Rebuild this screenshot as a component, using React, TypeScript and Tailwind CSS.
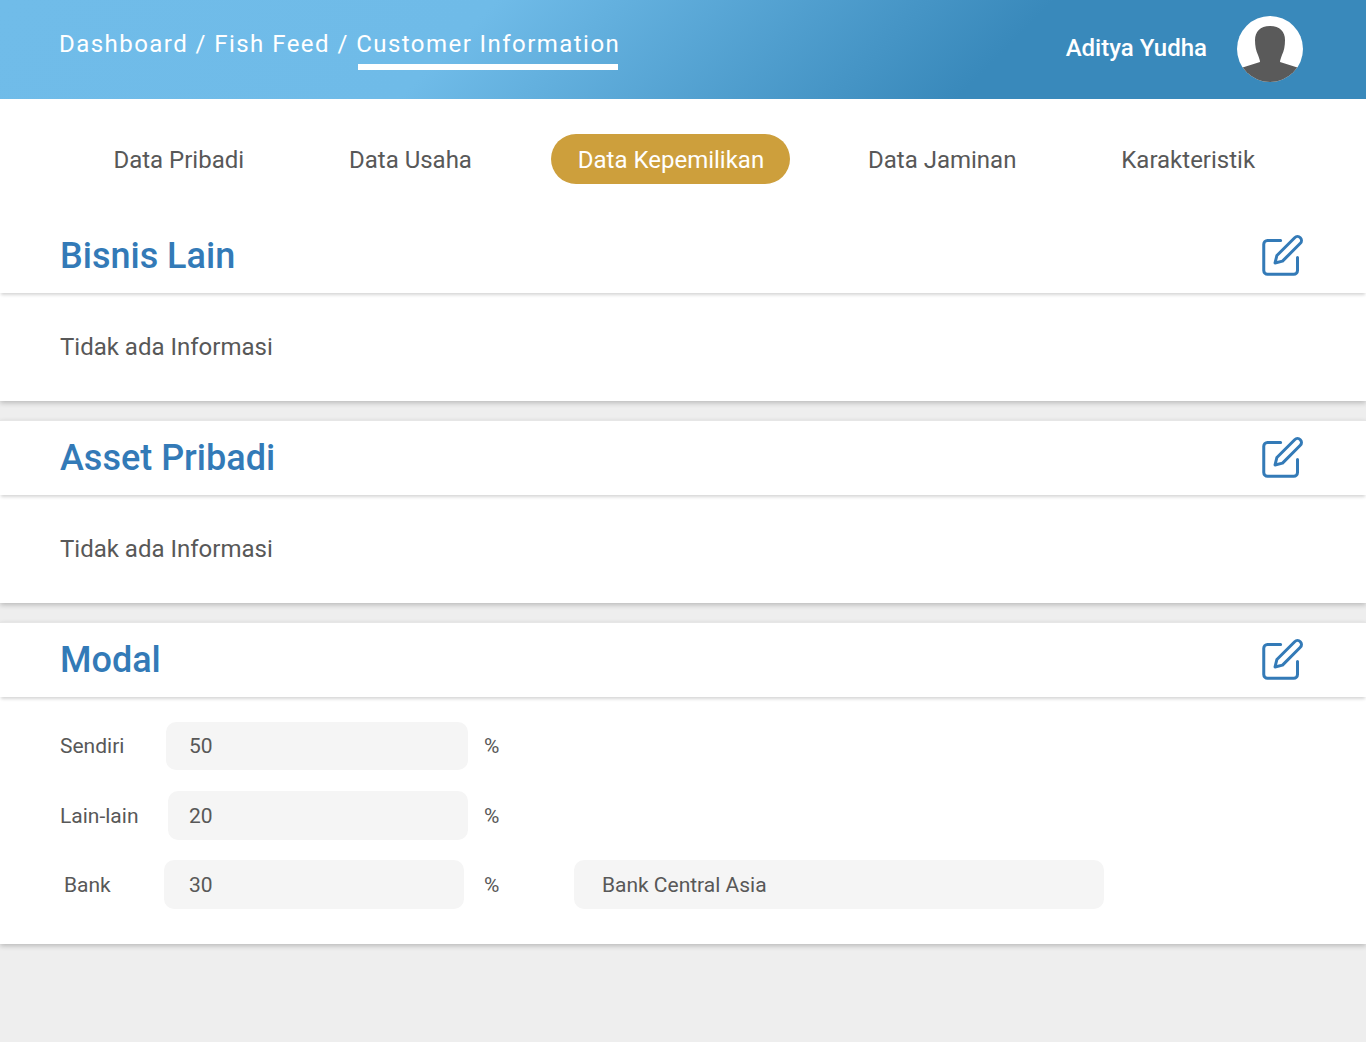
function EditIcon() {
  return (
    <svg viewBox="0 0 24 24" fill="none" stroke="#337ab7" strokeWidth={1.6} strokeLinecap="round" strokeLinejoin="round" className="mb-[2px] h-[45px] w-[45px]">
      <path d="M11 4H4a2 2 0 0 0-2 2v14a2 2 0 0 0 2 2h14a2 2 0 0 0 2-2v-7" />
      <path d="M18.5 2.5a2.121 2.121 0 0 1 3 3L12 15l-4 1 1-4 9.5-9.5z" />
    </svg>
  );
}

function Section({ title, children }: { title: string; children: React.ReactNode }) {
  return (
    <section className="bg-white shadow-[0_2px_5px_rgba(0,0,0,0.22)] border-t border-[#e6e6e6] first:border-t-0">
      <div className="relative flex h-[74px] items-center justify-between pl-[60px] pr-[61px] shadow-[0_3px_3px_-1px_rgba(0,0,0,0.16)]">
        <h2 className="text-[36px] font-medium leading-none text-[#337ab7]">{title}</h2>
        <EditIcon />
      </div>
      {children}
    </section>
  );
}

function Empty() {
  return <div className="flex h-[108px] items-center pl-[60px] text-[24px] text-[#585858]">Tidak ada Informasi</div>;
}

function Field({ className, children }: { className: string; children: React.ReactNode }) {
  return <div className={`flex items-center rounded-[10px] bg-[#f5f5f5] pt-[2px] text-[21px] text-[#585858] ${className}`}>{children}</div>;
}

export default function App() {
  return (
    <div className="min-h-[1042px] bg-[#eeeeee] font-['Roboto',sans-serif]">
      <header className="flex h-[99px] items-start justify-between bg-[linear-gradient(135deg,#70bce9_0%,#6fbbe8_34%,#3989bb_72%,#3989bb_100%)] pl-[59px] pr-[63px] text-white">
        <div className="mt-[29px] flex text-[24px] leading-[30px] tracking-[1.45px]">
          <span className="whitespace-pre">Dashboard / Fish Feed / </span>
          <span className="relative">
            Customer Information
            <span className="absolute left-[2px] top-[35px] h-[6px] w-[260px] bg-white" />
          </span>
        </div>
        <div className="mt-[16px] flex items-center gap-[30px]">
          <span className="-translate-y-[1px] text-[24px] font-medium">Aditya Yudha</span>
          <svg viewBox="0 0 66 66" className="h-[66px] w-[66px]">
            <defs>
              <clipPath id="c">
                <circle cx="33" cy="33" r="33" />
              </clipPath>
            </defs>
            <circle cx="33" cy="33" r="33" fill="#fff" />
            <g clipPath="url(#c)" fill="#5a5a5a">
              <path d="M33 10c-10 0-15 6-15 14 0 6 1 11 3 15 1 3 2 5 2 7l-19 6v20h58V52l-19-6c0-2 1-4 2-7 2-4 3-9 3-15 0-8-5-14-15-14z" />
            </g>
          </svg>
        </div>
      </header>

      <nav className="relative z-10 flex h-[120px] items-start justify-around bg-white pl-[62px] pr-[58.5px] pt-[35px] text-[24px] leading-[48px] text-[#585858]">
        <span className="-ml-[1px] px-[27px] pt-[2px]">Data Pribadi</span>
        <span className="px-[27px] pt-[2px]">Data Usaha</span>
        <span className="ml-[1px] rounded-full bg-[#cd9f3c] pl-[27px] pr-[26px] pt-[2px] text-white">Data Kepemilikan</span>
        <span className="px-[27px] pt-[2px]">Data Jaminan</span>
        <span className="px-[27px] pt-[2px]">Karakteristik</span>
      </nav>

      <main className="flex flex-col gap-[19px]">
        <Section title="Bisnis Lain">
          <Empty />
        </Section>
        <Section title="Asset Pribadi">
          <Empty />
        </Section>
        <Section title="Modal">
          <div className="flex h-[247px] flex-col pl-[60px] pt-[25px] text-[21px] text-[#585858]">
            <div className="flex h-[48px] items-center">
              <span className="w-[106px] pt-[2px]">Sendiri</span>
              <Field className="h-[48px] w-[302px] pl-[23px]">50</Field>
              <span className="ml-[16px] pt-[2px]">%</span>
            </div>
            <div className="mt-[21px] flex h-[49px] items-center">
              <span className="w-[108px] pt-[2px]">Lain-lain</span>
              <Field className="h-[49px] w-[300px] pl-[21px]">20</Field>
              <span className="ml-[16px] pt-[2px]">%</span>
            </div>
            <div className="mt-[20px] flex h-[49px] items-center pl-[4px]">
              <span className="w-[100px] pt-[2px]">Bank</span>
              <Field className="h-[49px] w-[300px] pl-[25px]">30</Field>
              <span className="ml-[20px] pt-[2px]">%</span>
              <Field className="ml-[75px] h-[49px] w-[530px] pl-[27.5px]">Bank Central Asia</Field>
            </div>
          </div>
        </Section>
      </main>
    </div>
  );
}
